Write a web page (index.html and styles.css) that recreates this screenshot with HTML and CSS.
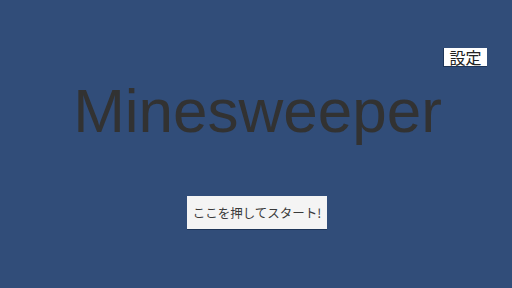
FILE: index.html
```html
<!DOCTYPE html>
<html lang="ja">
<head>
<meta charset="utf-8">
<link rel="stylesheet" href="styles.css">
</head>
<body>
<div class="screen">
  <div class="topbar">
    <button class="settings">設定</button>
  </div>
  <h1 class="title">Minesweeper</h1>
  <div class="start-row">
    <button class="start">ここを押してスタート!</button>
  </div>
</div>
</body>
</html>
```
FILE: styles.css
```css
html, body {
  margin: 0;
  padding: 0;
  width: 512px;
  height: 288px;
  overflow: hidden;
  background: #314d79;
}
.screen {
  display: flex;
  flex-direction: column;
  padding-top: 48px;
  height: 288px;
  box-sizing: border-box;
  font-family: "Liberation Sans", "Noto Sans CJK JP", sans-serif;
}
.topbar {
  display: flex;
  justify-content: flex-end;
  padding-right: 25px;
  height: 19px;
}
.settings {
  width: 44px;
  height: 19px;
  margin: 0;
  padding: 0;
  background: #ffffff;
  border: none;
  border-left: 1px solid #1d3558;
  border-bottom: 1px solid #1d3558;
  box-sizing: border-box;
  font-family: "Noto Sans CJK JP", sans-serif;
  font-size: 16px;
  line-height: 17px;
  color: #222;
}
.title {
  margin: 13px 0 0 0;
  padding-left: 3px;
  text-align: center;
  font-family: "Liberation Sans", Arial, sans-serif;
  font-weight: normal;
  font-size: 62px;
  line-height: 61px;
  color: #323232;
}
.start-row {
  display: flex;
  justify-content: center;
  margin-top: 55px;
  padding-left: 2px;
}
.start {
  width: 140px;
  height: 34px;
  margin: 0;
  padding: 0;
  background: #f4f4f4;
  border: none;
  border-bottom: 1px solid #1d3558;
  box-sizing: border-box;
  font-family: "Noto Sans CJK JP", sans-serif;
  font-size: 12.5px;
  color: #3a3a3a;
  white-space: nowrap;
}
```
